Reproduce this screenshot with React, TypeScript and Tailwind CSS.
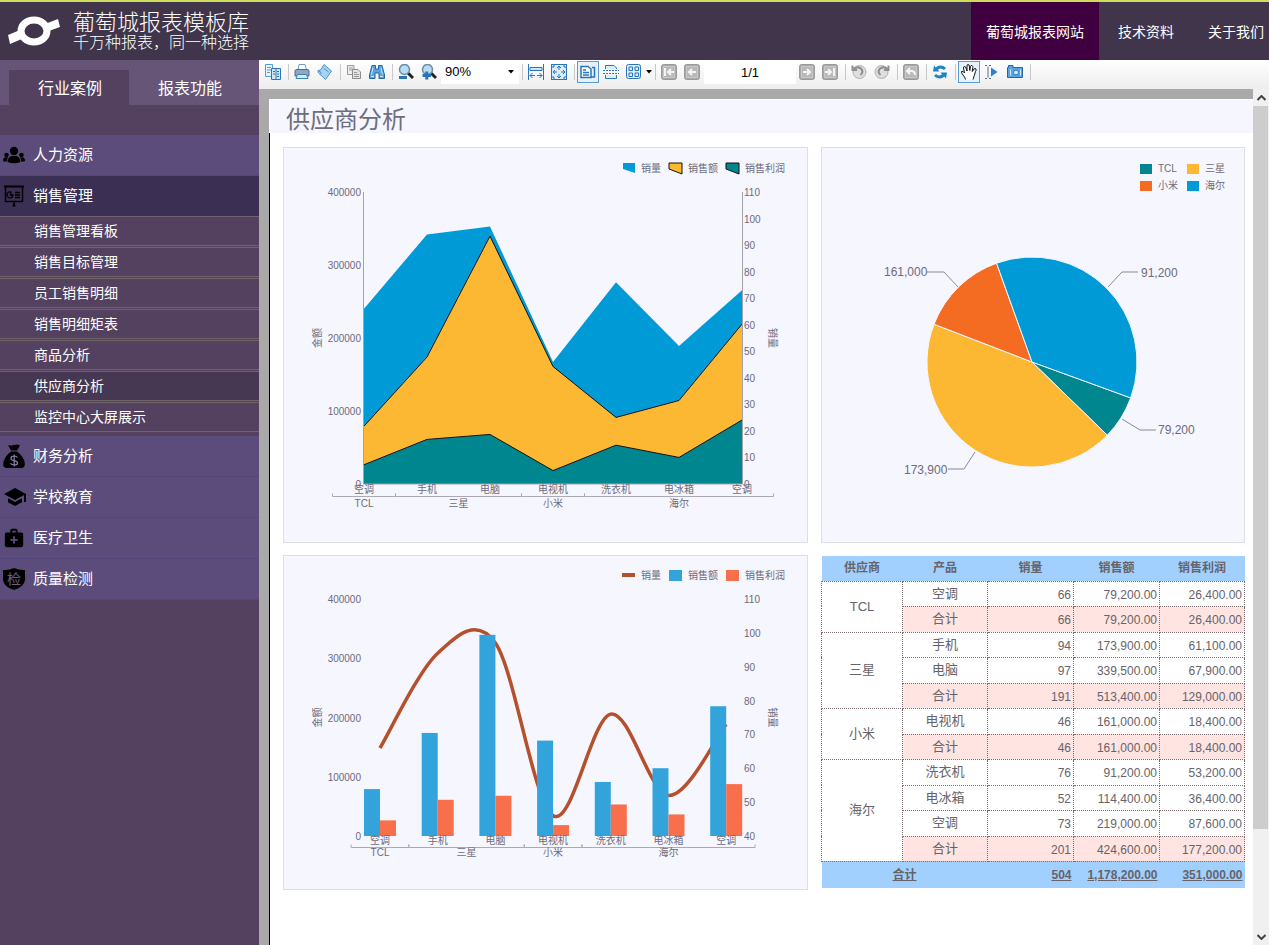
import React from "react";
import { MdMedicalServices, MdSchool } from "react-icons/md";

type Product = {
  name: string;
  count: number;
  sales: number;
  profit: number;
};

type Supplier = {
  name: string;
  color: string;
  products: Product[];
};

const suppliers: Supplier[] = [
  {
    name: "TCL",
    color: "#00868f",
    products: [{ name: "空调", count: 66, sales: 79200, profit: 26400 }],
  },
  {
    name: "三星",
    color: "#fdb833",
    products: [
      { name: "手机", count: 94, sales: 173900, profit: 61100 },
      { name: "电脑", count: 97, sales: 339500, profit: 67900 },
    ],
  },
  {
    name: "小米",
    color: "#f36c21",
    products: [{ name: "电视机", count: 46, sales: 161000, profit: 18400 }],
  },
  {
    name: "海尔",
    color: "#009ad6",
    products: [
      { name: "洗衣机", count: 76, sales: 91200, profit: 53200 },
      { name: "电冰箱", count: 52, sales: 114400, profit: 36400 },
      { name: "空调", count: 73, sales: 219000, profit: 87600 },
    ],
  },
];

const products = suppliers.flatMap((s) => s.products);

const sum = (list: Product[], key: "count" | "sales" | "profit") =>
  list.reduce((total, p) => total + p[key], 0);

const money = (value: number) =>
  value.toLocaleString("en-US", { minimumFractionDigits: 2 });

/* ---------- Header ---------- */

const Header = () => (
  <header className="flex h-[60px] items-stretch justify-between border-t-2 border-[#cddc5a] bg-[#40354a] text-white">
    <div className="flex items-center gap-[13px] pl-2">
      <svg width="52" height="30" viewBox="0 0 52 30" aria-hidden="true">
        <path d="M0 19 L12 14 L16 22 L2 28 Z M50 3 L37 8 L38 16 L52 11 Z" fill="#fff" />
        <ellipse cx="26" cy="15" rx="13" ry="11" fill="none" stroke="#fff" strokeWidth="7" />
      </svg>
      <div className="font-light">
        <h1 className="text-[22px] leading-[23px]">葡萄城报表模板库</h1>
        <p className="text-base leading-[18px]">千万种报表，同一种选择</p>
      </div>
    </div>
    <nav className="flex gap-1 text-sm">
      <a href="#site" className="flex items-center bg-[#400040] px-[15px] pt-0.5">
        葡萄城报表网站
      </a>
      <a href="#docs" className="flex items-center px-[15px] pt-0.5">
        技术资料
      </a>
      <a href="#about" className="flex items-center pt-0.5 pr-[5px] pl-[15px]">
        关于我们
      </a>
    </nav>
  </header>
);

/* ---------- Sidebar ---------- */

const PeopleIcon = () => (
  <svg width="22" height="18" viewBox="0 0 22 18">
    <circle cx="11" cy="5" r="4.200" />
    <path d="M4.500 16 Q5 10.500 9 10 L13 10 Q17 10.500 17.500 16 Q11 18.500 4.500 16 Z" />
    <circle cx="3.500" cy="9" r="2.300" />
    <circle cx="18.500" cy="9" r="2.300" />
    <path d="M0 14.500 Q0 11.500 3 11.300 L5 11.600 Q4 13 3.800 15.500 L0.500 15.500 Z M22 14.500 Q22 11.500 19 11.300 L17 11.600 Q18 13 18.200 15.500 L21.500 15.500 Z" />
  </svg>
);

const BoardIcon = () => (
  <svg width="22" height="22" viewBox="0 0 22 22" fill="none" stroke="#000">
    <path d="M1 1.500 H21" strokeWidth="2" />
    <path d="M2.500 2 V16.500 H19.500 V2 M11 17 V20" strokeWidth="1.500" />
    <path d="M8 7 A3 3 0 1 0 10 10 H7.500 Z M12 7.500 H17 M12 10 H17 M12 12.500 H17" strokeWidth="1.300" />
    <circle cx="11" cy="20.500" r="1" fill="#000" />
  </svg>
);

const MoneyBagIcon = () => (
  <svg width="22" height="24" viewBox="0 0 22 24">
    <path d="M5 1 Q8 2 11 1 Q14 0 17 1.500 L14 6.500 H8 Z" />
    <path d="M8 7.500 H14 Q21.500 13 21.800 20 Q22 24 18 24 H4 Q0 24 0.200 20 Q0.500 13 8 7.500 Z" />
    <path
      d="M14.500 13.500 Q13.500 12 11 12 Q8 12 8 14.200 Q8 16.200 11 16.500 Q14.500 17 14.500 19 Q14.500 21 11.300 21 Q8.500 21 7.500 19.300 M11.200 10.500 V22.500"
      fill="none"
      stroke="#8d80ad"
      strokeWidth="1.200"
    />
  </svg>
);

const ShieldIcon = () => (
  <svg width="22" height="22" viewBox="0 0 22 22">
    <path d="M0 2 Q6 2.500 11 0 Q16 2.500 22 2 V12 Q21 19 11 22 Q1 19 0 12 Z" />
    <text x="11" y="16" fontSize="14" textAnchor="middle" fill="#6d5f90">
      检
    </text>
  </svg>
);

const subItems = [
  "销售管理看板",
  "销售目标管理",
  "员工销售明细",
  "销售明细矩表",
  "商品分析",
  "供应商分析",
  "监控中心大屏展示",
];

const menuItems = [
  { label: "人力资源", icon: <PeopleIcon /> },
  { label: "销售管理", icon: <BoardIcon />, children: subItems },
  { label: "财务分析", icon: <MoneyBagIcon /> },
  { label: "学校教育", icon: <MdSchool size={24} /> },
  { label: "医疗卫生", icon: <MdMedicalServices size={22} /> },
  { label: "质量检测", icon: <ShieldIcon /> },
];

const Sidebar = () => (
  <aside className="w-[259px] shrink-0 bg-[#54415f] text-white">
    <div className="flex h-[45px] items-end bg-[#675577] pl-[9px]">
      <button className="h-[35px] w-[120px] bg-[#54415f] pt-0.5 pl-0.5 text-base">行业案例</button>
      <button className="h-[35px] w-[120px] pt-0.5 pl-0.5 text-base">报表功能</button>
    </div>
    <ul className="mt-[30px]">
      {menuItems.map((item) => (
        <li key={item.label}>
          <a
            href="#menu"
            className={`flex items-center text-[15px] ${
              item.children
                ? "h-10 bg-[#3b2f54]"
                : "h-[41px] border-b border-[#54457a] bg-[#5b4c7b]"
            }`}
          >
            <span className="flex w-[33px] items-center pl-[3px] text-black">{item.icon}</span>
            {item.label}
          </a>
          {item.children && (
            <ul className="mb-1 flex flex-col gap-px">
              {item.children.map((child) => (
                <li key={child}>
                  <a
                    href="#report"
                    className={`flex h-[30px] items-center border-y border-[#6f6369] pl-[34px] text-sm ${
                      child === "供应商分析" ? "bg-[#463752]" : ""
                    }`}
                  >
                    {child}
                  </a>
                </li>
              ))}
            </ul>
          )}
        </li>
      ))}
    </ul>
  </aside>
);

/* ---------- Toolbar ---------- */

type ToolProps = {
  label: string;
  active?: boolean;
  children: React.ReactNode;
};

const Tool = ({ label, active, children }: ToolProps) => (
  <button
    aria-label={label}
    className={`mr-px flex h-[22px] w-[22px] shrink-0 items-center justify-center ${
      active ? "border border-[#5b9bd0] bg-[#e6f2fb]" : ""
    }`}
  >
    <svg width="16" height="16" viewBox="0 0 16 16" className="shrink-0" fill="none" stroke="#2a75b8">
      {children}
    </svg>
  </button>
);

const Separator = () => (
  <span className="flex w-1.5 shrink-0 justify-center">
    <span className="h-4 w-px bg-[#c9c9c9]" />
  </span>
);

const GreyBox = ({ d }: { d: string }) => (
  <>
    <rect x="0.500" y="0.500" width="15" height="15" rx="2" fill="#a9a9a9" stroke="#9a9a9a" />
    <rect x="2.500" y="2.500" width="11" height="11" fill="#b9b9b9" stroke="#c8c8c8" />
    <path d={d} stroke="#f4f4f4" strokeWidth="2" />
  </>
);

const Toolbar = () => (
  <div
    role="toolbar"
    className="flex h-[29px] items-center overflow-hidden bg-linear-to-b from-white to-[#ededed] pb-[5px] pl-[3px]"
  >
    <Tool label="目录">
      <path d="M0.500 0.500 H7.500 V12.500 H0.500 Z" fill="#e8f3fc" stroke="#5a9bd0" />
      <path d="M2 3.500 H6 M2 6 H6 M2 8.500 H5" stroke="#5a9bd0" />
      <path d="M6.500 4.500 H15.500 V15.500 H6.500 Z" fill="#cfe6f8" />
      <path d="M11 4.500 V15 M8 7.500 H10 M8 10 H10 M12 7.500 H14 M12 10 H14 M12 12.500 H14" />
    </Tool>
    <Separator />
    <Tool label="打印">
      <path d="M4 6 L5 0.500 H11 L12.500 6" fill="#fff" stroke="#6b9cc6" />
      <path d="M1 7 Q1 5.500 3 5.500 H13 Q15 5.500 15 7 V12 H1 Z" fill="#8ba9c4" stroke="#4b6c8c" />
      <path d="M3.500 10.500 H12.500 L14 14.500 H2 Z" fill="#d9ecfa" stroke="#3b80bd" />
    </Tool>
    <Tool label="页面设置">
      <path d="M7 0.500 L14.500 7 L8.500 15.500 L2 9.500 Q0.500 8 1 6.500 L3.500 6 Z" fill="#a9d1f0" stroke="#4d94cf" />
      <path d="M1.500 7 Q4 7 4 10 M6.500 4 L11.500 8" stroke="#4d94cf" />
    </Tool>
    <Separator />
    <Tool label="复制">
      <path d="M1.500 1.500 H8 V10.500 H1.500 Z" fill="#eee" stroke="#999" />
      <path d="M6.500 5.500 H12 L14.500 8 V14.500 H6.500 Z" fill="#e4e4e4" stroke="#8b8b8b" />
      <path d="M3 4 H7 M3 6 H6 M8 8.500 H11 M8 10.500 H13 M8 12.500 H13" stroke="#999" />
    </Tool>
    <Tool label="查找">
      <path d="M3 1.500 H6.500 V5 H9.500 V1.500 H13 L15.500 11 V14.500 H10 V9 H6 V14.500 H0.500 V11 Z" fill="#5ba3de" stroke="#1e66a6" />
      <path d="M4 3.500 L2.500 10.500 M12 3.500 L13.500 10.500 M2 12.500 H5 M11 12.500 H14" stroke="#cfe6f8" />
    </Tool>
    <Separator />
    <Tool label="缩小">
      <path d="M10 9 L15 14" stroke="#222" strokeWidth="3" />
      <circle cx="6.500" cy="5.500" r="5" fill="#b9dcf2" stroke="#6d8ca6" strokeWidth="1.500" />
      <path d="M1 13.500 H9" strokeWidth="3" />
    </Tool>
    <Tool label="放大">
      <path d="M10 9 L15 14" stroke="#222" strokeWidth="3" />
      <circle cx="6.500" cy="5.500" r="5" fill="#b9dcf2" stroke="#6d8ca6" strokeWidth="1.500" />
      <path d="M1.500 11.500 H10 M5.800 7.500 V15.500" strokeWidth="3" />
    </Tool>
    <span className="relative flex w-[78px] shrink-0 items-center">
      <select
        aria-label="缩放"
        defaultValue="90%"
        className="h-[23px] w-full appearance-none bg-white pl-1 text-[13px] text-black"
      >
        <option>90%</option>
        <option>100%</option>
      </select>
      <svg width="6" height="4" viewBox="0 0 6 4" className="pointer-events-none absolute right-[5px]">
        <path d="M0 0 H6 L3 3.500 Z" />
      </svg>
    </span>
    <Separator />
    <Tool label="适合页宽">
      <path d="M0.500 0 V16 M15.500 0 V16" />
      <path d="M2 3.500 H14 V6.500 H2 Z" fill="#cfe6f8" />
      <path d="M2 11.500 H7 M9 11.500 H14 M4.500 9 L2 11.500 L4.500 14 M11.500 9 L14 11.500 L11.500 14" />
    </Tool>
    <Tool label="适合页面">
      <rect x="0.500" y="0.500" width="15" height="15" fill="#dcedfa" />
      <path d="M8 2 V6 M8 10 V14 M2 8 H6 M10 8 H14 M6 4 L8 2 L10 4 M6 12 L8 14 L10 12 M4 6 L2 8 L4 10 M12 6 L14 8 L12 10" />
      <path d="M2 4 V2 H4 M12 2 H14 V4 M2 12 V14 H4 M12 14 H14 V12" />
    </Tool>
    <Separator />
    <Tool label="单页" active>
      <path d="M1 2.500 H8 L11 5 V13.500 H1 Z" fill="#fff" strokeWidth="1.500" />
      <path d="M3 6 H6 M3 8.500 H9 M3 11 H9 M12 3.500 H14.500 V13 H11" strokeWidth="1.500" />
    </Tool>
    <Tool label="连续页">
      <path d="M2.500 5 V1.500 H11 L13.500 4 V5 M2.500 11 V14.500 H13.500 V11" fill="#dcedfa" />
      <path d="M0 6.500 H16 M0 9.500 H16" strokeDasharray="2 1" />
    </Tool>
    <span className="flex w-[29px] shrink-0 items-center">
      <Tool label="多页">
        <rect x="0.500" y="0.500" width="14" height="14" rx="2" fill="#dcedfa" />
        <path d="M3 3 H6.500 V6.500 H3 Z M9 3 H12.500 V6.500 H9 Z M3 9 H6.500 V12.500 H3 Z M9 9 H12.500 V12.500 H9 Z" />
      </Tool>
      <svg width="6" height="4" viewBox="0 0 6 4" className="shrink-0">
        <path d="M0 0 H6 L3 3.500 Z" />
      </svg>
    </span>
    <Separator />
    <Tool label="首页">
      <GreyBox d="M4 4 V12 M13 8 H7 M10 5 L7 8 L10 11" />
    </Tool>
    <Tool label="上一页">
      <GreyBox d="M12 8 H5 M8 5 L5 8 L8 11" />
    </Tool>
    <input
      aria-label="页码"
      defaultValue="1/1"
      className="h-[23px] w-[92px] shrink-0 bg-white text-center text-[13px] text-black"
    />
    <Tool label="下一页">
      <GreyBox d="M4 8 H11 M8 5 L11 8 L8 11" />
    </Tool>
    <Tool label="末页">
      <GreyBox d="M12 4 V12 M3 8 H9 M6 5 L9 8 L6 11" />
    </Tool>
    <Separator />
    <Tool label="撤销">
      <circle cx="8.500" cy="8" r="6.500" fill="#dedede" stroke="#b0b0b0" />
      <path d="M1.500 1.500 V6 H6 M2.500 5 Q6 2 10 4.500 Q13 8 9.500 11" stroke="#8f8f8f" strokeWidth="2" />
    </Tool>
    <Tool label="重做">
      <circle cx="7.500" cy="8" r="6.500" fill="#dedede" stroke="#b0b0b0" />
      <path d="M14.500 1.500 V6 H10 M13.500 5 Q10 2 6 4.500 Q3 8 6.500 11" stroke="#8f8f8f" strokeWidth="2" />
    </Tool>
    <Separator />
    <Tool label="返回">
      <GreyBox d="M7 4 L4 7 L7 10 M4 7 H9 Q12 7.500 12 11" />
    </Tool>
    <Separator />
    <Tool label="刷新">
      <path d="M4 6.500 Q5 3 8.500 3 Q11 3 13 5 M12 9.500 Q11 13 7.500 13 Q5 13 3 11" strokeWidth="3" stroke="#1f83c4" />
      <path d="M1 7.500 H7.500 L2 1.500 Z M15 8.500 H8.500 L14 14.500 Z" fill="#1f83c4" stroke="none" />
    </Tool>
    <Separator />
    <Tool label="拖动" active>
      <path
        d="M4.500 15.500 Q4 13 2 11 Q0 8.500 0.500 7.500 Q2 6.500 3.500 9 L2.500 4 Q2.500 2.500 3.500 2.500 Q4.500 2.500 5 4 L6 7 V2 Q6 0.500 7 0.500 Q8.200 0.500 8.300 2 L8.800 6.500 L9.500 2.500 Q10 1 11 1.500 Q12 2 11.800 3.500 L11.300 7.500 L13 5 Q14 4 15 5 Q15.500 6 14.500 7.500 Q13.500 11 12 15.500"
        fill="#fff"
        stroke="#111"
      />
    </Tool>
    <Tool label="选择文本">
      <path d="M1 1.500 H3 M5 1.500 H7 M4 2.500 V13.500 M1 14.500 H3 M5 14.500 H7" stroke="#4a6f94" />
      <path d="M7 3.500 L13.500 8 L7 12.500 Z" fill="#2a82cc" stroke="none" />
    </Tool>
    <Tool label="快照">
      <path d="M0.500 3.500 H1.500 V1.500 H6 V3.500 H15.500 V13.500 H0.500 Z" fill="#5aa5e0" stroke="#2266a5" />
      <circle cx="9" cy="8.500" r="2.500" fill="#cfe6f8" />
      <path d="M3.500 5.500 V11.500 M13.500 5.500 V11.500" stroke="#cfe6f8" />
    </Tool>
    <Separator />
  </div>
);

/* ---------- Charts ---------- */

const scaleY = (value: number, min: number, max: number, top: number, bottom: number) =>
  bottom - ((value - min) / (max - min)) * (bottom - top);

type AxisProps = {
  top: number;
  bottom: number;
  rightMin: number;
};

const AxisLabels = ({ top, bottom, rightMin }: AxisProps) => {
  const left = [0, 100000, 200000, 300000, 400000];
  const right: number[] = [];
  for (let v = rightMin; v <= 110; v += 10) right.push(v);
  const middle = (top + bottom) / 2;

  return (
    <g>
      {left.map((v) => (
        <text key={v} x="78" y={scaleY(v, 0, 400000, top, bottom) + 4} textAnchor="end">
          {v}
        </text>
      ))}
      {right.map((v) => (
        <text key={v} x="461" y={scaleY(v, rightMin, 110, top, bottom) + 4}>
          {v}
        </text>
      ))}
      <text textAnchor="middle" transform={`translate(38 ${middle}) rotate(-90)`}>
        金额
      </text>
      <text textAnchor="middle" transform={`translate(486 ${middle}) rotate(90)`}>
        销量
      </text>
    </g>
  );
};

type CategoryProps = {
  start: number;
  step: number;
  nameY: number;
  lineY: number;
  groupY: number;
};

// Product names, the bracket under them, and the supplier names
const CategoryAxis = ({ start, step, nameY, lineY, groupY }: CategoryProps) => {
  let index = 0;
  const groups = suppliers.map((s) => {
    const from = start + (index - 0.5) * step;
    index += s.products.length;
    const to = start + (index - 0.5) * step;
    return { name: s.name, from, to };
  });

  return (
    <g textAnchor="middle">
      {products.map((p, i) => (
        <text key={i} x={start + i * step} y={nameY}>
          {p.name}
        </text>
      ))}
      {groups.map((g) => (
        <g key={g.name}>
          <path
            d={`M${g.from} ${lineY - 3} V${lineY} H${g.to} V${lineY - 3}`}
            fill="none"
            stroke="#aaa9b4"
          />
          <text x={(g.from + g.to) / 2} y={groupY}>
            {g.name}
          </text>
        </g>
      ))}
    </g>
  );
};

const chartSvg = "block h-auto w-full fill-[#6d6b7b] text-[10px]";

const AreaChart = () => {
  const top = 45;
  const bottom = 337;
  const start = 81;
  const step = 63;

  const line = (key: "count" | "sales" | "profit", max: number) =>
    products.map((p, i) => `${start + i * step},${scaleY(p[key], 0, max, top, bottom)}`).join(" ");
  const area = (points: string) => `${start},${bottom} ${points} ${start + 6 * step},${bottom}`;

  const count = line("count", 110);
  const sales = line("sales", 400000);
  const profit = line("profit", 400000);

  return (
    <svg viewBox="1 1 523 394" className={chartSvg}>
      <polygon points="340,16 352,16 352,26 340,22" fill="#009ad6" />
      <text x="358" y="25">销量</text>
      <polygon points="386,16 399,16 399,27 386,22" fill="#fdb833" stroke="#111" />
      <text x="405" y="25">销售额</text>
      <polygon points="443,16 456,16 456,27 443,22" fill="#00868f" stroke="#111" />
      <text x="462" y="25">销售利润</text>

      <polygon points={area(count)} fill="#009ad6" />
      <polygon points={area(sales)} fill="#fdb833" />
      <polyline points={sales} fill="none" stroke="#111" />
      <polygon points={area(profit)} fill="#00868f" />
      <polyline points={profit} fill="none" stroke="#111" />
      <path d={`M80.500 ${top} V${bottom} H459.500 V${top}`} fill="none" stroke="#a3a2ae" />
      <AxisLabels top={top} bottom={bottom} rightMin={0} />
      <CategoryAxis start={start} step={step} nameY={346} lineY={349.5} groupY={360} />
    </svg>
  );
};

// Catmull-Rom spline through the points, as cubic segments
const smoothPath = (pts: number[][]) => {
  let d = `M${pts[0][0]} ${pts[0][1]}`;
  for (let i = 0; i < pts.length - 1; i++) {
    const p0 = pts[i - 1] || pts[i];
    const p1 = pts[i];
    const p2 = pts[i + 1];
    const p3 = pts[i + 2] || p2;
    d += ` C${p1[0] + (p2[0] - p0[0]) / 6} ${p1[1] + (p2[1] - p0[1]) / 6} ${
      p2[0] - (p3[0] - p1[0]) / 6
    } ${p2[1] - (p3[1] - p1[1]) / 6} ${p2[0]} ${p2[1]}`;
  }
  return d;
};

const BarChart = () => {
  const top = 44;
  const bottom = 281;
  const start = 97;
  const step = 57.7;
  const points = products.map((p, i) => [
    start + i * step,
    scaleY(p.count, 40, 110, top, bottom),
  ]);

  return (
    <svg viewBox="1 1 523 333" className={chartSvg}>
      <rect x="339" y="18" width="13" height="4" fill="#b5502d" />
      <text x="358" y="24">销量</text>
      <rect x="386" y="15" width="13" height="11" fill="#33a3dc" />
      <text x="405" y="24">销售额</text>
      <rect x="443" y="15" width="13" height="11" fill="#f8704b" />
      <text x="462" y="24">销售利润</text>

      <path d={smoothPath(points)} fill="none" stroke="#b5502d" strokeWidth="3.500" />
      {products.map((p, i) => {
        const x = start + i * step;
        const salesTop = scaleY(p.sales, 0, 400000, top, bottom);
        const profitTop = scaleY(p.profit, 0, 400000, top, bottom);
        return (
          <g key={i}>
            <rect x={x - 16} y={salesTop} width="16" height={bottom - salesTop} fill="#33a3dc" />
            <rect x={x} y={profitTop} width="16" height={bottom - profitTop} fill="#f8704b" />
          </g>
        );
      })}
      <AxisLabels top={top} bottom={bottom} rightMin={40} />
      <CategoryAxis start={start} step={step} nameY={289} lineY={292.5} groupY={301} />
    </svg>
  );
};

const pieLabels = [
  { value: "79,200", line: "M301 272 L319 283 H335", x: 337, y: 287 },
  { value: "173,900", line: "M154 305 L143 322 H127", x: 83, y: 327 },
  { value: "161,000", line: "M137 140 L123 125 H106", x: 63, y: 129 },
  { value: "91,200", line: "M287 140 L301 125 H317", x: 320, y: 130 },
];

const PieChart = () => {
  const cx = 211;
  const cy = 215;
  const r = 105;
  const total = sum(products, "sales");
  const point = (deg: number) => {
    const a = (deg * Math.PI) / 180;
    return `${cx + r * Math.cos(a)} ${cy + r * Math.sin(a)}`;
  };

  let angle = 20;
  const slices = suppliers.map((s) => {
    const from = angle;
    angle += (sum(s.products, "sales") / total) * 360;
    return { name: s.name, color: s.color, d: `M${cx} ${cy} L${point(from)} A${r} ${r} 0 0 1 ${point(angle)} Z` };
  });

  return (
    <svg viewBox="1 1 422 394" className={chartSvg}>
      {suppliers.map((s, i) => {
        const x = i % 2 === 0 ? 319 : 366;
        const y = i < 2 ? 17 : 34;
        return (
          <g key={s.name}>
            <rect x={x} y={y} width="12" height="10" fill={s.color} />
            <text x={x + 18} y={y + 8}>
              {s.name}
            </text>
          </g>
        );
      })}
      {slices.map((s) => (
        <path key={s.name} d={s.d} fill={s.color} stroke="#f6f6fe" />
      ))}
      {pieLabels.map((l) => (
        <g key={l.value} className="text-xs">
          <path d={l.line} fill="none" stroke="#8a8995" />
          <text x={l.x} y={l.y}>
            {l.value}
          </text>
        </g>
      ))}
    </svg>
  );
};

/* ---------- Table ---------- */

const cell = "border border-dotted border-[#7d6c70] py-0 leading-5";
const numberCell = `${cell} pt-0.5 pr-[2px] text-right text-xs`;

const SupplierTable = () => {
  let rowIndex = 0;
  const rowHeight = () => (rowIndex++ % 2 === 0 ? "h-[25px]" : "h-[26px]");

  return (
    <table className="mt-px w-full table-fixed border-collapse self-start text-[13px] text-[#66636a]">
      <colgroup>
        <col className="w-[81px]" />
        <col className="w-[85px]" />
        <col className="w-[86px]" />
        <col className="w-[86px]" />
        <col />
      </colgroup>
      <thead>
        <tr className="h-[25px] bg-[#a1d0ff] text-xs">
          <th>供应商</th>
          <th>产品</th>
          <th>销量</th>
          <th>销售额</th>
          <th>销售利润</th>
        </tr>
      </thead>
      <tbody>
        {suppliers.map((s) => (
          <React.Fragment key={s.name}>
            {s.products.map((p, i) => (
              <tr key={p.name} className={rowHeight()}>
                {i === 0 && (
                  <td rowSpan={s.products.length + 1} className={`${cell} text-center`}>
                    {s.name}
                  </td>
                )}
                <td className={`${cell} text-center`}>{p.name}</td>
                <td className={numberCell}>{p.count}</td>
                <td className={numberCell}>{money(p.sales)}</td>
                <td className={numberCell}>{money(p.profit)}</td>
              </tr>
            ))}
            <tr className={rowHeight()}>
              <td className={`${cell} bg-[#ffe4e1] text-center`}>合计</td>
              <td className={`${numberCell} bg-[#ffe4e1]`}>{sum(s.products, "count")}</td>
              <td className={`${numberCell} bg-[#ffe4e1]`}>{money(sum(s.products, "sales"))}</td>
              <td className={`${numberCell} bg-[#ffe4e1]`}>{money(sum(s.products, "profit"))}</td>
            </tr>
          </React.Fragment>
        ))}
      </tbody>
      <tfoot>
        <tr className="h-[27px] bg-[#a1d0ff] text-xs font-bold underline">
          <td colSpan={2} className="text-center">
            合计
          </td>
          <td className="pr-[2px] text-right">{sum(products, "count")}</td>
          <td className="pr-[2px] text-right">{money(sum(products, "sales"))}</td>
          <td className="pr-[2px] text-right">{money(sum(products, "profit"))}</td>
        </tr>
      </tfoot>
    </table>
  );
};

/* ---------- Report ---------- */

const ScrollBar = () => (
  <div className="flex w-4 shrink-0 flex-col bg-[#f0f0f0]">
    <button aria-label="向上滚动" className="flex h-[17px] items-center justify-center">
      <svg width="9" height="6" viewBox="0 0 9 6" fill="none" stroke="#444" strokeWidth="2">
        <path d="M0.500 5 L4.500 1 L8.500 5" />
      </svg>
    </button>
    <div className="mr-px grow-[88] bg-[#cdcdcd]" />
    <div className="grow-[12]" />
    <button aria-label="向下滚动" className="flex h-[17px] items-center justify-center">
      <svg width="9" height="6" viewBox="0 0 9 6" fill="none" stroke="#444" strokeWidth="2">
        <path d="M0.500 1 L4.500 5 L8.500 1" />
      </svg>
    </button>
  </div>
);

const panel = "border border-[#dedeea] bg-[#f6f6fe]";

const Report = () => (
  <div className="flex min-w-0 grow flex-col bg-[#a9a9a9] pt-[10px] pl-[10px]">
    <h2 className="h-[34px] border-t border-l border-white bg-[#f6f6fe] pl-4 text-2xl leading-10 text-[#6f6d7c]">
      供应商分析
    </h2>
    <div className="grow border-l border-black bg-white pt-[14px] pr-2 pl-[13px]">
      <div className="grid grid-cols-[525fr_424fr] gap-x-[13px] gap-y-3">
        <div className={panel}>
          <AreaChart />
        </div>
        <div className={panel}>
          <PieChart />
        </div>
        <div className={panel}>
          <BarChart />
        </div>
        <SupplierTable />
      </div>
    </div>
  </div>
);

const App = () => {
  return (
    <div className="flex min-h-screen flex-col font-['Liberation_Sans','Noto_Sans_CJK_SC',sans-serif]">
      <Header />
      <div className="flex grow">
        <Sidebar />
        <main className="flex min-w-0 grow flex-col">
          <Toolbar />
          <div className="flex grow">
            <Report />
            <ScrollBar />
          </div>
        </main>
      </div>
    </div>
  );
};

export default App;
